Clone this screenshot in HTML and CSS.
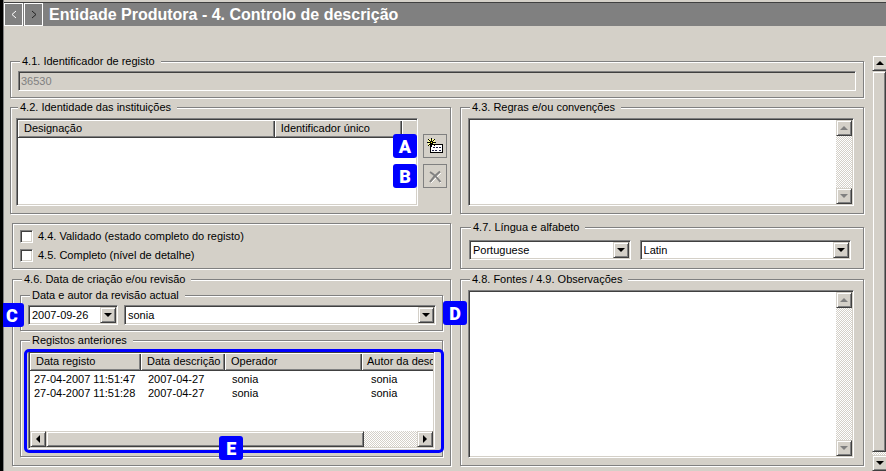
FILE: index.html
```html
<!DOCTYPE html>
<html lang="pt">
<head>
<meta charset="utf-8">
<title>Entidade Produtora</title>
<link rel="stylesheet" href="styles.css">
</head>
<body>
<header class="titlebar">
  <button class="nav" type="button" aria-label="Anterior"><svg width="6" height="9" viewBox="0 0 6 9"><path d="M5 1L1 4.500L5 8"/></svg></button>
  <button class="nav next" type="button" aria-label="Seguinte"><svg width="6" height="9" viewBox="0 0 6 9"><path d="M1 1L5 4.500L1 8"/></svg></button>
  <h1>Entidade Produtora - 4. Controlo de descrição</h1>
</header>
<div class="workspace">
  <form class="form">
    <fieldset class="record">
      <legend><label for="record">4.1. Identificador de registo</label></legend>
      <input class="field" id="record" type="text" value="36530" disabled>
    </fieldset>

    <fieldset class="institutions">
      <legend>4.2. Identidade das instituições</legend>
      <div class="with-tools">
        <div class="sunken list">
          <table>
            <colgroup><col class="c-name"><col class="c-id"><col></colgroup>
            <thead><tr><th>Designação</th><th>Identificador único</th><th></th></tr></thead>
          </table>
        </div>
        <div class="tools">
          <div class="anchor">
            <button class="tool" type="button" aria-label="Adicionar">
              <svg width="18" height="18" viewBox="0 0 18 18" shape-rendering="crispEdges">
                <path d="M2 2h7v7h-7z" fill="#ff9"/>
                <path d="M4.500 7.500H16.500V15.500H4.500Z" fill="#fff" stroke="#000"/>
                <path d="M7 10h2v1h-2zM10 10h2v1h-2zM13 10h2v1h-2zM6 13h2v1h-2zM9 13h2v1h-2zM13 13h2v1h-2z" fill="#224"/>
                <path d="M5.500 1V10M1 5.500H10M2 2L9 9M9 2L2 9" stroke="#000"/>
                <path d="M5 5h1v1h-1z" fill="#ff0"/>
              </svg>
            </button>
            <span class="badge before">A</span>
          </div>
          <div class="anchor">
            <button class="tool" type="button" aria-label="Remover" disabled>
              <svg width="18" height="18" viewBox="0 0 18 18">
                <path d="M5 6L15 16M15 6L5 16" stroke="#fff"/>
                <path d="M4 5Q9 8 14.500 15M14 4.500Q8 9 4 15" stroke="#808080" stroke-width="2" fill="none"/>
              </svg>
            </button>
            <span class="badge before">B</span>
          </div>
        </div>
      </div>
    </fieldset>

    <fieldset class="memo">
      <legend><label for="rules">4.3. Regras e/ou convenções</label></legend>
      <div class="sunken pane">
        <textarea id="rules"></textarea>
        <div class="bar"><span class="key up off"></span><span class="key down off"></span></div>
      </div>
    </fieldset>

    <div class="status">
      <label><input type="checkbox">4.4. Validado (estado completo do registo)</label>
      <label><input type="checkbox">4.5. Completo (nível de detalhe)</label>
    </div>

    <fieldset class="language">
      <legend>4.7. Língua e alfabeto</legend>
      <div class="pair">
        <div class="combo tongue"><select aria-label="Língua"><option>Portuguese</option></select><span class="key down"></span></div>
        <div class="combo script"><select aria-label="Alfabeto"><option>Latin</option></select><span class="key down"></span></div>
      </div>
    </fieldset>

    <fieldset class="revision">
      <legend>4.6. Data de criação e/ou revisão</legend>
      <fieldset class="current">
        <legend>Data e autor da revisão actual</legend>
        <div class="row">
          <div class="combo date"><select aria-label="Data"><option>2007-09-26</option></select><span class="key down"></span></div>
          <div class="combo author"><select aria-label="Autor"><option>sonia</option></select><span class="key down"></span></div>
          <span class="badge far-left">C</span>
          <span class="badge far-right">D</span>
        </div>
      </fieldset>
      <fieldset class="history">
        <legend>Registos anteriores</legend>
        <div class="marked">
          <div class="sunken list">
            <table class="log">
              <colgroup><col class="c-reg"><col class="c-desc"><col class="c-op"><col></colgroup>
              <thead><tr><th>Data registo</th><th>Data descrição</th><th>Operador</th><th>Autor da desc</th></tr></thead>
              <tbody>
                <tr><td>27-04-2007 11:51:47</td><td>2007-04-27</td><td>sonia</td><td>sonia</td></tr>
                <tr><td>27-04-2007 11:51:28</td><td>2007-04-27</td><td>sonia</td><td>sonia</td></tr>
              </tbody>
            </table>
            <div class="hbar"><span class="key left"></span><span class="thumb"></span><span class="key right"></span></div>
          </div>
          <span class="badge below">E</span>
        </div>
      </fieldset>
    </fieldset>

    <fieldset class="memo last">
      <legend><label for="notes">4.8. Fontes / 4.9. Observações</label></legend>
      <div class="sunken pane">
        <textarea id="notes"></textarea>
        <div class="bar"><span class="key up off"></span><span class="key down off"></span></div>
      </div>
    </fieldset>
  </form>
  <div class="page-bar"><span class="key up"></span><span class="thumb"></span><span class="key down"></span></div>
</div>
</body>
</html>
```
FILE: styles.css
```css
:root {
  --face: #d4d0c8;
  --shade: #808080;
  --dark: #404040;
  --blue: #0000ff;
}

* { box-sizing: border-box; }

body {
  margin: 0;
  min-height: 100vh;
  display: flex;
  flex-direction: column;
  background: var(--face);
  border-left: 3px solid #000;
  box-shadow: inset 1px 0 0 var(--shade);
  color: #000;
  font: 11px/13px "Liberation Sans", Arial, sans-serif;
}

button, input, select, textarea { font: inherit; color: inherit; margin: 0; border-radius: 0; }
svg { display: block; fill: none; }

.titlebar {
  display: flex;
  margin: 2px 0 0 1px;
  border-top: 1px solid var(--dark);
  background: var(--shade);
  height: 24px;
}
.titlebar h1 {
  margin: 0 0 0 5px;
  color: #fff;
  font-size: 16px;
  line-height: 23px;
  white-space: nowrap;
}
.nav {
  width: 19px;
  margin-right: 1px;
  padding: 0;
  display: grid;
  place-items: center;
  background: var(--shade);
  border: 1px solid #fff;
}
.nav svg { stroke: #fff; }
.nav.next svg { stroke: #222; }

.workspace {
  flex: 1;
  display: flex;
  padding-top: 29px;
}
.form {
  flex: 1;
  min-width: 0;
  display: grid;
  grid-template-columns: minmax(0, 441fr) minmax(0, 404fr);
  grid-template-rows: auto auto auto 1fr;
  gap: 3px 9px;
  padding: 0 8px 5px 7px;
}

fieldset, .status {
  min-width: 0;
  margin: 0;
  border: 1px solid var(--shade);
  box-shadow: 1px 1px 0 #fff, inset 1px 1px 0 #fff;
}
legend {
  margin-left: 2px;
  padding: 0 6px 0 2px;
  background: var(--face);
  white-space: nowrap;
}

.record { grid-column: 1 / -1; padding: 3px 7px 6px; }
.institutions { padding: 4px 3px 7px 5px; }
.memo { display: flex; flex-direction: column; padding: 4px 9px 7px 7px; }
.language { margin-top: 4px; padding: 6px 12px 8px 8px; }
.status { margin: 6px 0 0 2px; padding: 3px 7px 2px; }
.revision { margin: 1px 0 0 2px; padding: 3px 7px 8px; }
.memo.last { margin-top: 1px; }
.current { margin-bottom: 3px; padding: 3px 6px 5px 7px; }
.history { padding: 4px 7px 7px; }

.field {
  display: block;
  width: 100%;
  height: 20px;
  padding: 0 2px;
  background: var(--face);
  color: var(--shade);
}
.sunken, .field, .combo, .status input {
  border: 1px solid;
  border-color: var(--shade) #fff #fff var(--shade);
  box-shadow: inset 1px 1px 0 var(--dark), inset -1px -1px 0 var(--face);
}
.sunken { background: #fff; padding: 1px; overflow: hidden; }

.with-tools { display: flex; gap: 5px; }
.with-tools .list { flex: 1; height: 88px; }
.tools { display: flex; flex-direction: column; gap: 6px; padding-top: 16px; }
.anchor, .row, .marked { position: relative; }
.tool {
  display: grid;
  place-items: center;
  width: 24px;
  height: 24px;
  padding: 0;
  background: var(--face);
  border: 1px solid var(--shade);
}

table { width: 100%; table-layout: fixed; border-collapse: separate; border-spacing: 0; }
th {
  height: 18px;
  padding: 0 0 0 6px;
  overflow: hidden;
  background: var(--face);
  border-bottom: 1px solid var(--dark);
  box-shadow: inset 1px 1px 0 #fff, inset -1px 0 0 var(--dark), inset -2px -1px 0 var(--shade);
  font-weight: normal;
  text-align: left;
  white-space: nowrap;
}
th:last-child { box-shadow: inset 1px 1px 0 #fff, inset 0 -1px 0 var(--shade); }
td { height: 14px; padding: 0 0 0 7px; white-space: nowrap; }
td:first-child { padding-left: 4px; }
td:last-child { padding-left: 9px; }
tbody tr:first-child td { height: 15px; padding-top: 1px; }
.c-name { width: 64.5%; }
.c-id { width: 32%; }
.c-reg { width: 111px; }
.c-desc { width: 84px; }
.c-op { width: 137px; }
.log th:last-child { padding-left: 5px; }

.pane { display: flex; flex: 1; }
.memo textarea {
  flex: 1;
  min-width: 0;
  height: 84px;
  padding: 2px;
  border: 0;
  outline: 0;
  resize: none;
  background: #fff;
}
.memo.last textarea { height: auto; }

.bar, .hbar, .page-bar {
  display: flex;
  background: repeating-conic-gradient(var(--face) 0 25%, #fff 0 50%) 0 0 / 2px 2px;
}
.bar { flex-direction: column; justify-content: space-between; width: 16px; }
.key, .thumb {
  flex: none;
  background: var(--face);
  border: 1px solid;
  border-color: var(--face) var(--dark) var(--dark) var(--face);
  box-shadow: inset 1px 1px 0 #fff, inset -1px -1px 0 var(--shade);
}
.key { display: grid; place-items: center; width: 16px; height: 16px; color: #000; }
.key.off { color: var(--shade); }
.key::after { content: ""; border: 4px solid transparent; }
.up::after { border-width: 0 4px 4px; border-bottom-color: currentColor; }
.down::after { border-width: 4px 4px 0; border-top-color: currentColor; }
.left::after { border-width: 4px 4px 4px 0; border-right-color: currentColor; }
.right::after { border-width: 4px 0 4px 4px; border-left-color: currentColor; }

.page-bar { flex-direction: column; width: 14px; overflow: hidden; }
.page-bar .thumb { flex: 1; margin-bottom: 3px; }

.pair, .row { display: flex; }
.pair { gap: 9px; }
.row { gap: 6px; }
.combo { display: flex; height: 20px; padding: 1px; background: #fff; }
.combo select {
  flex: 1;
  min-width: 0;
  padding: 0 0 0 2px;
  appearance: none;
  border: 0;
  outline: 0;
  background: #fff;
}
.combo .key { pointer-events: none; }
.tongue { flex: 161 1 0; }
.script { flex: 212 1 0; }
.date { width: 90px; }
.author { flex: 1; }

.status label { display: flex; align-items: center; height: 19px; }
.status input { appearance: none; width: 13px; height: 13px; margin-right: 5px; background: #fff; }

.revision { display: flex; flex-direction: column; }
.history { flex: 1; display: flex; flex-direction: column; }
.marked { flex: 1; display: flex; }
.marked .list { flex: 1; min-width: 0; display: flex; flex-direction: column; justify-content: space-between; }
.marked::after {
  content: "";
  position: absolute;
  inset: -2px -9px -4px -4px;
  border: 3px solid var(--blue);
  border-radius: 5px;
  pointer-events: none;
}
.hbar .thumb { width: 79%; margin-right: auto; }

.badge {
  position: absolute;
  z-index: 1;
  width: 24px;
  height: 24px;
  border-radius: 3px;
  background: var(--blue);
  color: #fff;
  font: 900 18px/25px Roboto, "Liberation Sans", sans-serif;
  text-align: center;
}
.before { right: 30px; top: 0; }
.far-left { left: -28px; top: -2px; }
.far-right { right: -31px; top: -4px; }
.below { left: 47%; bottom: -11px; }
```
